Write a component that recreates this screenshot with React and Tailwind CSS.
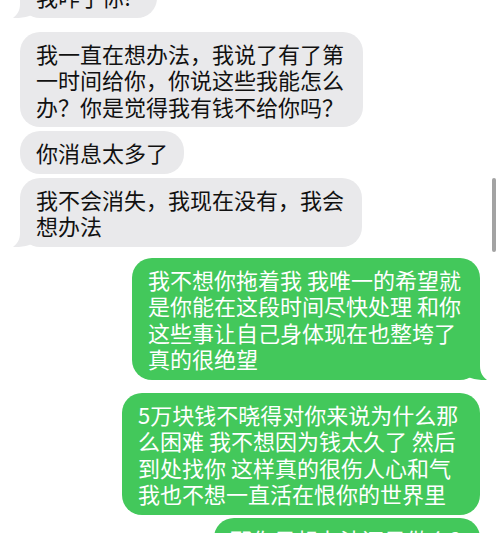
const Tail = ({ color, side }) => (
  <svg
    width="26"
    height="22"
    viewBox="0 0 26 22"
    className={
      side === "left"
        ? "absolute left-[-7px] bottom-0"
        : "absolute right-[-7px] bottom-0 -scale-x-100"
    }
  >
    <path
      d="M7 0 L7 8 C7 15 4 19 0 22 C7 22.5 14 21 19 19 L26 21 L26 0 Z"
      fill={color}
    />
  </svg>
);

const Bubble = ({ from, lines, width, tail, className = "" }) => {
  const me = from === "me";
  return (
    <div
      className={`relative rounded-[20px] px-4 py-2 text-[22px] leading-[26.5px] ${
        me ? "bg-[#43c85b] text-white self-end" : "bg-[#e9e9eb] text-[#111] self-start"
      } ${width} ${className}`}
    >
      {tail && <Tail color={me ? "#43c85b" : "#e9e9eb"} side={me ? "right" : "left"} />}
      <div className="relative">
        {lines.map((l, i) => (
          <div key={i} className="whitespace-nowrap">
            {l}
          </div>
        ))}
      </div>
    </div>
  );
};

export default function App() {
  return (
    <div className="relative w-[500px] h-[533px] overflow-hidden bg-white font-['Noto_Sans_CJK_SC',sans-serif]">
      <div className="flex flex-col px-5">
        <Bubble from="them" width="w-[137px]" tail className="mt-[-25px]" lines={["我咋了你!"]} />
        <Bubble
          from="them"
          width="w-[343px]"
          className="mt-[14px]"
          lines={["我一直在想办法，我说了有了第", "一时间给你，你说这些我能怎么", "办？你是觉得我有钱不给你吗？"]}
        />
        <Bubble from="them" width="w-[164px]" className="mt-1" lines={["你消息太多了"]} />
        <Bubble
          from="them"
          width="w-[342px]"
          tail
          className="mt-1"
          lines={["我不会消失，我现在没有，我会", "想办法"]}
        />
        <Bubble
          from="me"
          width="w-[348px]"
          tail
          className="mt-[11px]"
          lines={["我不想你拖着我 我唯一的希望就", "是你能在这段时间尽快处理 和你", "这些事让自己身体现在也整垮了", "真的很绝望"]}
        />
        <Bubble
          from="me"
          width="w-[358px]"
          className="mt-[13px]"
          lines={["5万块钱不晓得对你来说为什么那", "么困难 我不想因为钱太久了 然后", "到处找你 这样真的很伤人心和气", "我也不想一直活在恨你的世界里"]}
        />
        <Bubble
          from="me"
          width="w-[266px]"
          className="mt-[3px]"
          lines={["那你是想办法还是做么?", "我等你"]}
        />
      </div>
      {/* scroll indicator */}
      <div className="absolute left-[492px] top-[178px] w-[4px] h-[74px] rounded-full bg-[#a3a3a3]" />
    </div>
  );
}
